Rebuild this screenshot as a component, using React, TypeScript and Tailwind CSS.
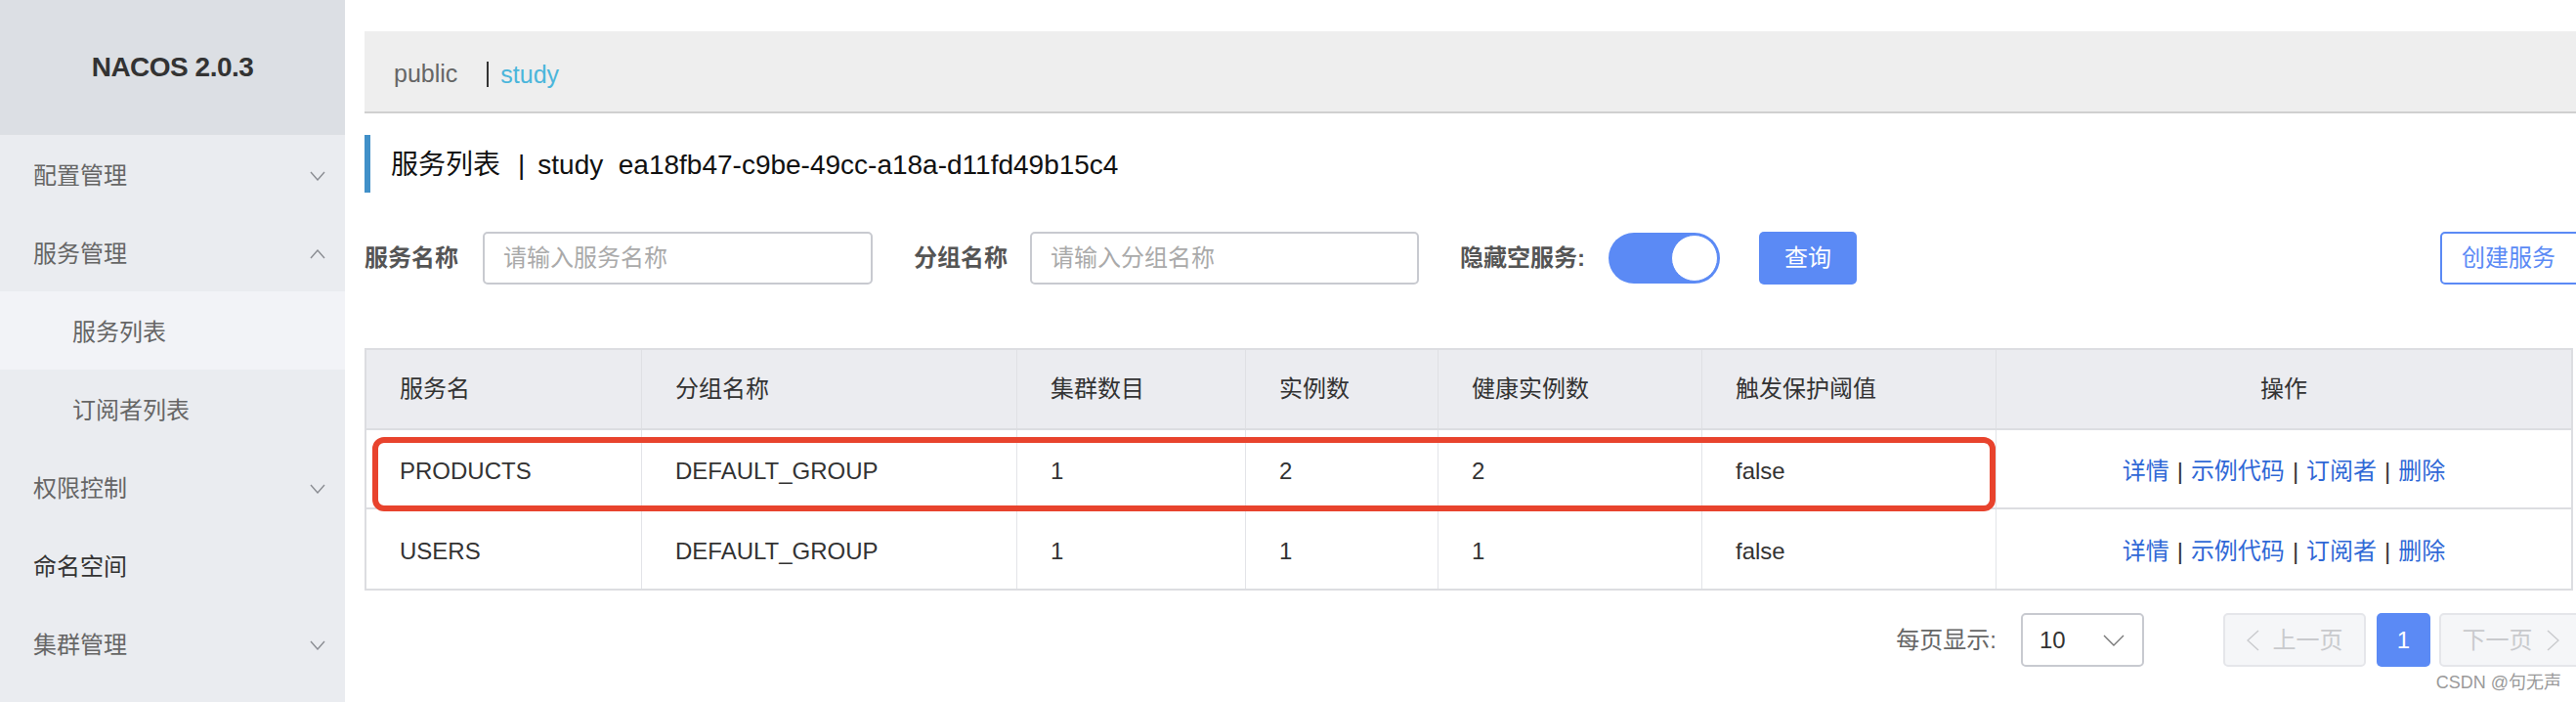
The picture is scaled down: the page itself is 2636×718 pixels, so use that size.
import React from "react";

type MenuItem = {
  label: string;
  arrow?: "up" | "down";
  sub?: boolean;
  active?: boolean;
  dark?: boolean;
};

const menu: MenuItem[] = [
  { label: "配置管理", arrow: "down" },
  { label: "服务管理", arrow: "up" },
  { label: "服务列表", sub: true, active: true },
  { label: "订阅者列表", sub: true },
  { label: "权限控制", arrow: "down" },
  { label: "命名空间", dark: true },
  { label: "集群管理", arrow: "down" },
];

const columns = ["服务名", "分组名称", "集群数目", "实例数", "健康实例数", "触发保护阈值", "操作"];

const rows = [
  ["PRODUCTS", "DEFAULT_GROUP", "1", "2", "2", "false"],
  ["USERS", "DEFAULT_GROUP", "1", "1", "1", "false"],
];

function Chevron({ dir, color = "#8a8c92", w = 16, h = 10 }: { dir: "up" | "down" | "left" | "right"; color?: string; w?: number; h?: number }) {
  const pts =
    dir === "up"
      ? `1,${h - 1} ${w / 2},1 ${w - 1},${h - 1}`
      : dir === "down"
      ? `1,1 ${w / 2},${h - 1} ${w - 1},1`
      : dir === "left"
      ? `${w - 1},1 1,${h / 2} ${w - 1},${h - 1}`
      : `1,1 ${w - 1},${h / 2} 1,${h - 1}`;
  return (
    <svg width={w} height={h} viewBox={`0 0 ${w} ${h}`} fill="none" stroke={color} strokeWidth="1.4">
      <polyline points={pts} />
    </svg>
  );
}

function Sidebar() {
  return (
    <div className="w-[353px] shrink-0 bg-[#eaecf0] flex flex-col">
      <div className="h-[138px] bg-[#dcdfe4] flex items-center justify-center">
        <span className="text-[28px] font-bold text-[#333] tracking-[-0.5px]">NACOS 2.0.3</span>
      </div>
      {menu.map((item) => (
        <div
          key={item.label}
          className={`h-[80px] flex items-center justify-between pr-[20px] pt-[4px] text-[24px] ${
            item.sub ? "pl-[74px]" : "pl-[34px]"
          } ${item.active ? "bg-[#f2f3f7]" : ""} ${item.dark ? "text-[#333]" : "text-[#666]"}`}
        >
          <span>{item.label}</span>
          {item.arrow && <Chevron dir={item.arrow} />}
        </div>
      ))}
    </div>
  );
}

function Toggle() {
  return (
    <div className="w-[114px] h-[52px] shrink-0 rounded-full bg-[#5b8af5] flex items-center justify-end p-[2px]">
      <div className="w-[48px] h-[48px] rounded-full bg-white border border-[#5b8af5]" />
    </div>
  );
}

function SearchRow() {
  return (
    <div className="flex items-center h-[54px] mt-[40px]">
      <span className="shrink-0 text-[24px] font-bold text-[#555]">服务名称</span>
      <div className="ml-[25px] w-[399px] h-[54px] shrink-0 border-2 border-[#c8cad0] rounded-[5px] flex items-center pl-[19px] text-[24px] text-[#aaa]">
        请输入服务名称
      </div>
      <span className="ml-[42px] shrink-0 text-[24px] font-bold text-[#555]">分组名称</span>
      <div className="ml-[23px] w-[398px] h-[54px] shrink-0 border-2 border-[#c8cad0] rounded-[5px] flex items-center pl-[19px] text-[24px] text-[#aaa]">
        请输入分组名称
      </div>
      <span className="ml-[42px] shrink-0 text-[24px] font-bold text-[#555]">隐藏空服务:</span>
      <div className="ml-[24px]">
        <Toggle />
      </div>
      <button className="ml-[40px] w-[100px] h-[54px] shrink-0 rounded-[5px] bg-[#5b8af5] text-white text-[24px]">
        查询
      </button>
      <button className="ml-[597px] w-[150px] h-[54px] shrink-0 rounded-[5px] border-2 border-[#5b8af5] bg-white text-[#5b8af5] text-[24px] text-left pl-[20px]">
        创建服务
      </button>
    </div>
  );
}

function Table() {
  const grid = "grid grid-cols-[282px_384px_234px_197px_270px_301px_1fr]";
  return (
    <div className="relative mt-[65px] mr-[3px] border-2 border-[#dcdde1]">
      <div className={`${grid} h-[82px] bg-[#ebecf0] border-b-2 border-[#dcdde1] text-[24px] text-[#333]`}>
        {columns.map((c, i) => (
          <div
            key={c}
            className={`flex items-center ${i === columns.length - 1 ? "justify-center" : "pl-[34px] border-r border-[#dfe0e4]"}`}
          >
            {c}
          </div>
        ))}
      </div>
      {rows.map((r, ri) => (
        <div
          key={r[0]}
          className={`${grid} h-[81px] bg-white text-[24px] text-[#333] ${ri < rows.length - 1 ? "border-b-2 border-[#dcdde1]" : ""}`}
        >
          {r.map((v, i) => (
            <div key={i} className="flex items-center pl-[34px] pt-[5px] border-r border-[#e3e4e8]">
              {v}
            </div>
          ))}
          <div className="flex items-center justify-center pt-[5px] text-[#2f68d6]">
            <span>详情</span>
            <span className="mx-[8px] text-[#333]">|</span>
            <span>示例代码</span>
            <span className="mx-[8px] text-[#333]">|</span>
            <span>订阅者</span>
            <span className="mx-[8px] text-[#333]">|</span>
            <span>删除</span>
          </div>
        </div>
      ))}
      <div className="absolute left-[6px] top-[89px] w-[1661px] h-[76px] border-[6px] border-[#e8432d] rounded-[12px] pointer-events-none" />
    </div>
  );
}

function Pagination() {
  return (
    <div className="flex items-center justify-end h-[55px] mt-[22px] mr-[-6px] pt-[2px]">
      <span className="shrink-0 text-[24px] text-[#666]">每页显示:</span>
      <div className="ml-[25px] w-[126px] h-[55px] shrink-0 border-2 border-[#c8cad0] rounded-[5px] flex items-center justify-between pl-[17px] pr-[18px]">
        <span className="text-[24px] text-[#333]">10</span>
        <Chevron dir="down" w={22} h={12} color="#777" />
      </div>
      <div className="ml-[81px] w-[146px] h-[55px] shrink-0 border-2 border-[#e5e6ea] bg-[#f5f6f8] rounded-[5px] flex items-center justify-center gap-[14px] text-[24px] text-[#c9cacd]">
        <Chevron dir="left" w={13} h={22} color="#c9cacd" />
        <span>上一页</span>
      </div>
      <div className="ml-[11px] w-[55px] h-[55px] shrink-0 rounded-[5px] bg-[#5b8af5] flex items-center justify-center text-[24px] text-white">
        1
      </div>
      <div className="ml-[9px] w-[146px] h-[55px] shrink-0 border-2 border-[#e5e6ea] bg-[#f5f6f8] rounded-[5px] flex items-center justify-center gap-[14px] text-[24px] text-[#c9cacd]">
        <span>下一页</span>
        <Chevron dir="right" w={13} h={22} color="#c9cacd" />
      </div>
    </div>
  );
}

export default function App() {
  return (
    <div className="relative w-[2636px] h-[718px] overflow-hidden flex bg-white font-['Liberation_Sans','Noto_Sans_CJK_SC',sans-serif]">
      <Sidebar />
      <div className="flex-1 min-w-0 pl-[20px] pt-[32px]">
        <div className="h-[84px] bg-[#eeeeee] border-b-2 border-[#d0d0d0] flex items-center pl-[30px] pt-[6px] text-[25px]">
          <span className="text-[#666]">public</span>
          <span className="ml-[30px] pl-[12px] border-l-2 border-[#333] leading-[26px] text-[#4bb6db]">study</span>
        </div>
        <div className="mt-[22px] h-[59px] border-l-[6px] border-[#4190c8] flex items-center pl-[21px] pt-[2px] text-[28px] text-[#111] whitespace-pre">
          <span>服务列表</span>
          <span className="ml-[18px] mr-[13px]">|</span>
          <span>study  ea18fb47-c9be-49cc-a18a-d11fd49b15c4</span>
        </div>
        <SearchRow />
        <Table />
        <Pagination />
      </div>
      <span className="absolute right-[15px] bottom-[6px] text-[18px] text-[#9a9a9a]">CSDN @句无声</span>
    </div>
  );
}
